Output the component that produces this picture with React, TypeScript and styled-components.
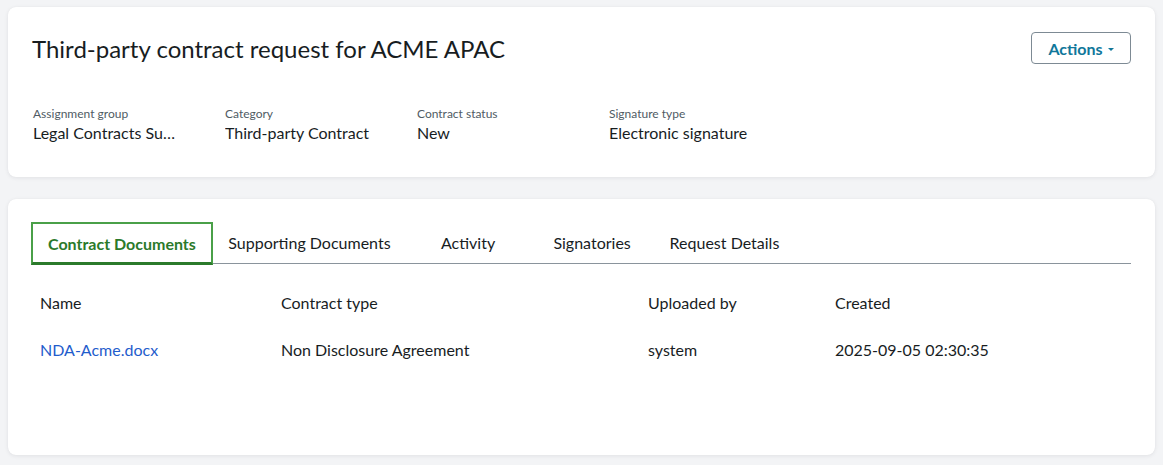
import React from "react";
import styled, { createGlobalStyle } from "styled-components";

const GlobalStyle = createGlobalStyle`
  html, body {
    margin: 0;
    padding: 0;
    background: #f3f4f6;
  }
  body {
    font-family: Lato, "Noto Sans", "Liberation Sans", sans-serif;
    color: #181d1f;
    -webkit-font-smoothing: antialiased;
  }
`;

const Page = styled.div`
  display: flex;
  flex-direction: column;
  gap: 22px;
  padding: 7px 8px 8px 8px;
`;

const Card = styled.section<{ $height: number }>`
  background: #ffffff;
  border-radius: 8px;
  box-shadow: 0 1px 4px rgba(20, 30, 40, 0.08), 0 0 1px rgba(20, 30, 40, 0.06);
  height: ${(p) => p.$height}px;
  box-sizing: border-box;
  padding: 24px;
`;

const HeaderRow = styled.div`
  display: flex;
  justify-content: space-between;
  align-items: flex-start;
`;

const Title = styled.h1`
  margin: 0;
  padding-top: 3px;
  font-size: 24px;
  line-height: 30px;
  font-weight: 400;
  color: #181d1f;
`;

const ActionsButton = styled.button`
  display: inline-flex;
  align-items: center;
  gap: 5px;
  height: 32px;
  width: 100px;
  justify-content: center;
  margin-top: 1px;
  border: 1px solid #7d8a94;
  border-radius: 4px;
  background: #ffffff;
  color: #10779a;
  font-family: inherit;
  font-size: 16px;
  font-weight: 700;
  cursor: pointer;
`;

const Caret = styled.span`
  width: 0;
  height: 0;
  border-left: 3.5px solid transparent;
  border-right: 3.5px solid transparent;
  border-top: 3.5px solid #10779a;
  margin-top: 2px;
`;

const Fields = styled.dl`
  display: grid;
  grid-template-columns: repeat(4, 192px);
  margin: 42px 0 0 1px;
`;

const Field = styled.div`
  display: flex;
  flex-direction: column;
  gap: 0;
  min-width: 0;
`;

const FieldLabel = styled.dt`
  font-size: 12px;
  line-height: 16px;
  color: #4f5b64;
`;

const FieldValue = styled.dd`
  margin: 0;
  font-size: 16px;
  line-height: 22px;
  color: #181d1f;
  max-width: 146px;
  white-space: nowrap;
  overflow: hidden;
  text-overflow: ellipsis;
`;

const TabList = styled.div`
  display: flex;
  align-items: stretch;
  margin-top: -1px;
  border-bottom: 1px solid #8a949c;
  height: 41px;
`;

const Tab = styled.button<{ $active?: boolean }>`
  min-width: 124px;
  padding: 0 ${(p) => (p.$active ? "15px" : "15.5px")};
  background: #ffffff;
  font-family: inherit;
  font-size: 16px;
  font-weight: ${(p) => (p.$active ? 700 : 400)};
  color: ${(p) => (p.$active ? "#2b7a2b" : "#181d1f")};
  border: ${(p) => (p.$active ? "2px solid #4aa048" : "0")};
  border-bottom-width: ${(p) => (p.$active ? "3px" : "0")};
  border-bottom-color: ${(p) => (p.$active ? "#2b7a2b" : "transparent")};
  margin-bottom: ${(p) => (p.$active ? "-2px" : "0")};
  margin-left: ${(p) => (p.$active ? "-1px" : "0")};
  cursor: pointer;
  white-space: nowrap;
`;

const Table = styled.div`
  display: grid;
  grid-template-columns: 241px 367px 187px 1fr;
  margin-top: 29px;
`;

const Cell = styled.div<{ $head?: boolean }>`
  padding: 0 8px;
  font-size: 16px;
  line-height: 20px;
  color: #181d1f;
  height: ${(p) => (p.$head ? "47px" : "20px")};
`;

const DocLink = styled.a`
  color: #1f5dcc;
  text-decoration: none;
`;

const fields = [
  { label: "Assignment group", value: "Legal Contracts Support" },
  { label: "Category", value: "Third-party Contract" },
  { label: "Contract status", value: "New" },
  { label: "Signature type", value: "Electronic signature" },
];

const tabs = [
  "Contract Documents",
  "Supporting Documents",
  "Activity",
  "Signatories",
  "Request Details",
];

const columns = ["Name", "Contract type", "Uploaded by", "Created"];

export default function App() {
  return (
    <>
      <GlobalStyle />
      <Page>
        <Card $height={170}>
          <HeaderRow>
            <Title>Third-party contract request for ACME APAC</Title>
            <ActionsButton>
              Actions <Caret />
            </ActionsButton>
          </HeaderRow>
          <Fields>
            {fields.map((f) => (
              <Field key={f.label}>
                <FieldLabel>{f.label}</FieldLabel>
                <FieldValue title={f.value}>{f.value}</FieldValue>
              </Field>
            ))}
          </Fields>
        </Card>
        <Card $height={256}>
          <TabList>
            {tabs.map((t, i) => (
              <Tab key={t} $active={i === 0}>
                {t}
              </Tab>
            ))}
          </TabList>
          <Table>
            {columns.map((c) => (
              <Cell key={c} $head>
                {c}
              </Cell>
            ))}
            <Cell>
              <DocLink href="#">NDA-Acme.docx</DocLink>
            </Cell>
            <Cell>Non Disclosure Agreement</Cell>
            <Cell>system</Cell>
            <Cell>2025-09-05 02:30:35</Cell>
          </Table>
        </Card>
      </Page>
    </>
  );
}
